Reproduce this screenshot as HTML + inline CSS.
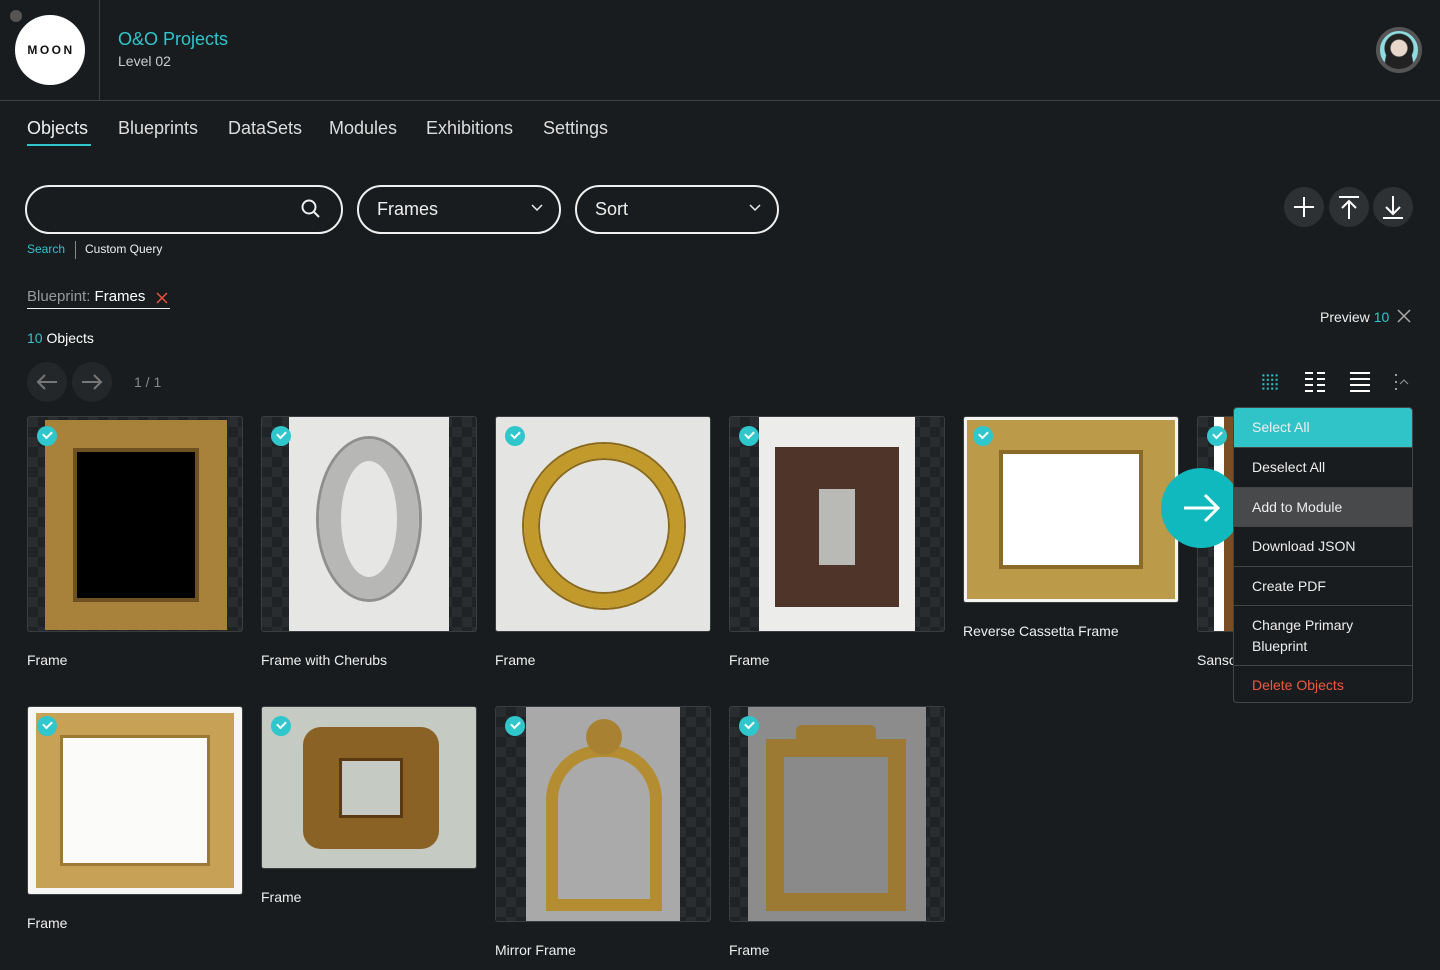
<!DOCTYPE html>
<html><head><meta charset="utf-8"><style>
*{box-sizing:border-box;margin:0;padding:0}
body{width:1440px;height:970px;background:#191c1e;font-family:"Liberation Sans",sans-serif;color:#e8e8e8;position:relative;overflow:hidden}
.a{position:absolute}
.t{font-size:14px;color:#eee;white-space:nowrap}
.chk{background:repeating-conic-gradient(#202325 0 25%,#2a2d2f 0 50%) 0 0/20px 20px}
.card{position:absolute;border:1px solid #3a3e41;border-radius:3px;overflow:hidden}
.tick{position:absolute;width:20px;height:20px;border-radius:50%;background:#2fc6cc;left:9px;top:9px}
.tick:after{content:"";position:absolute;left:6px;top:5px;width:7px;height:4px;border-left:2px solid #fff;border-bottom:2px solid #fff;transform:rotate(-45deg)}
.gold{border-style:solid;border-color:#b08a3a;background:transparent}
.pill{position:absolute;border:2px solid #f0f0f0;border-radius:25px;height:49px;top:185px}
.menu div{height:39.5px;border-top:1px solid #444;padding-left:18px;line-height:38px;font-size:14px;color:#eee}
.ib{position:absolute;width:40px;height:40px;border-radius:50%;background:#2e3133;top:187px}
</style></head><body>
<!-- header -->
<div class="a" style="left:10px;top:10px;width:12px;height:12px;border-radius:50%;background:#555"></div>
<div class="a" style="left:15px;top:15px;width:70px;height:70px;border-radius:50%;background:#fff;color:#111;font-size:12px;font-weight:bold;letter-spacing:2.5px;text-align:center;line-height:70px;padding-left:2px">MOON</div>
<div class="a" style="left:99px;top:0;width:1px;height:100px;background:#3c4043"></div>
<div class="a" style="left:0;top:100px;width:1440px;height:1px;background:#3c4043"></div>
<div class="a" style="left:118px;top:29px;font-size:18px;color:#2fc6cc">O&amp;O Projects</div>
<div class="a" style="left:118px;top:53px;font-size:14px;color:#ccc">Level 02</div>
<div class="a" style="left:1376px;top:27px;width:46px;height:46px;border-radius:50%;border:4px solid #555;background:radial-gradient(circle at 50% 45%,#e8d8cc 0 8px,#222 9px 14px,transparent 15px),radial-gradient(ellipse at 50% 100%,#222 0 14px,transparent 15px),#8fdde0"></div>
<!-- nav -->
<div class="a" style="left:27px;top:118px;font-size:18px;color:#eee">Objects</div>
<div class="a" style="left:27px;top:144px;width:64px;height:2px;background:#2fc6cc"></div>
<div class="a" style="left:118px;top:118px;font-size:18px;color:#ddd">Blueprints</div>
<div class="a" style="left:228px;top:118px;font-size:18px;color:#ddd">DataSets</div>
<div class="a" style="left:329px;top:118px;font-size:18px;color:#ddd">Modules</div>
<div class="a" style="left:426px;top:118px;font-size:18px;color:#ddd">Exhibitions</div>
<div class="a" style="left:543px;top:118px;font-size:18px;color:#ddd">Settings</div>
<!-- search -->
<div class="pill" style="left:25px;width:318px"></div>
<svg class="a" style="left:299px;top:197px" width="24" height="24" viewBox="0 0 24 24" fill="none" stroke="#eee" stroke-width="2"><circle cx="10" cy="10" r="6.5"/><path d="M15 15l5 5"/></svg>
<div class="pill" style="left:357px;width:204px"></div>
<div class="a" style="left:377px;top:199px;font-size:18px;color:#eee">Frames</div>
<svg class="a" style="left:530px;top:203px" width="14" height="10" viewBox="0 0 14 10" fill="none" stroke="#eee" stroke-width="1.5"><path d="M2 2l5 5 5-5"/></svg>
<div class="pill" style="left:575px;width:204px"></div>
<div class="a" style="left:595px;top:199px;font-size:18px;color:#eee">Sort</div>
<svg class="a" style="left:748px;top:203px" width="14" height="10" viewBox="0 0 14 10" fill="none" stroke="#eee" stroke-width="1.5"><path d="M2 2l5 5 5-5"/></svg>
<div class="a" style="left:27px;top:242px;font-size:12px;color:#2fc6cc">Search</div>
<div class="a" style="left:75px;top:241px;width:1px;height:18px;background:#888"></div>
<div class="a" style="left:85px;top:242px;font-size:12px;color:#eee">Custom Query</div>
<!-- right icons -->
<div class="ib" style="left:1284px"></div><div class="ib" style="left:1329px"></div><div class="ib" style="left:1373px"></div>
<svg class="a" style="left:1284px;top:187px" width="130" height="40" viewBox="0 0 130 40" fill="none" stroke="#fff" stroke-width="2"><path d="M20 10v20M10 20h20"/><path d="M55 10h20M65 14v18M58 21l7-7 7 7"/><path d="M99 31h20M109 9v18M102 20l7 7 7-7"/></svg>
<!-- filter -->
<div class="a" style="left:27px;top:288px;font-size:15px;color:#999">Blueprint: <span style="color:#fff">Frames</span></div>
<svg class="a" style="left:156px;top:292px" width="12" height="12" viewBox="0 0 12 12" stroke="#e8553b" stroke-width="1.5"><path d="M1 1l10 10M11 1L1 11"/></svg>
<div class="a" style="left:27px;top:308px;width:143px;height:1px;background:#eee"></div>
<div class="a" style="left:27px;top:330px;font-size:14px;color:#fff"><span style="color:#2fc6cc">10</span> Objects</div>
<div class="a" style="left:1320px;top:309px;font-size:14px;color:#eee">Preview <span style="color:#2fc6cc">10</span></div>
<svg class="a" style="left:1397px;top:309px" width="14" height="14" viewBox="0 0 14 14" stroke="#aaa" stroke-width="1.5"><path d="M1 1l12 12M13 1L1 13"/></svg>
<!-- pager -->
<div class="a" style="left:27px;top:362px;width:40px;height:40px;border-radius:50%;background:#24272a"></div>
<div class="a" style="left:72px;top:362px;width:40px;height:40px;border-radius:50%;background:#24272a"></div>
<svg class="a" style="left:27px;top:362px" width="85" height="40" viewBox="0 0 85 40" fill="none" stroke="#777" stroke-width="2"><path d="M30 20H11M18 13l-7 7 7 7"/><path d="M55 20h19M67 13l7 7-7 7"/></svg>
<div class="a" style="left:134px;top:374px;font-size:14px;color:#888">1 / 1</div>
<!-- view icons -->
<svg class="a" style="left:1258px;top:370px" width="160" height="24" viewBox="0 0 160 24">
<g fill="#2fc6cc"><pattern id="p" width="4.4" height="4.4" patternUnits="userSpaceOnUse"><rect width="2" height="2"/></pattern><rect x="2" y="2" width="20" height="20" fill="url(#p)"/></g>
<g fill="#fff"><rect x="47" y="2" width="8" height="2"/><rect x="59" y="2" width="8" height="2"/><rect x="47" y="8" width="8" height="2"/><rect x="59" y="8" width="8" height="2"/><rect x="47" y="14" width="8" height="2"/><rect x="59" y="14" width="8" height="2"/><rect x="47" y="20" width="8" height="2"/><rect x="59" y="20" width="8" height="2"/>
<rect x="92" y="2" width="20" height="2"/><rect x="92" y="8" width="20" height="2"/><rect x="92" y="14" width="20" height="2"/><rect x="92" y="20" width="20" height="2"/></g>
<g fill="#999"><rect x="137" y="4" width="2" height="2"/><rect x="137" y="11" width="2" height="2"/><rect x="137" y="18" width="2" height="2"/></g>
<path d="M142 14l4-4 4 4" stroke="#999" fill="none" stroke-width="1"/></svg>
<!-- row 1 -->
<div class="card chk" style="left:27px;top:416px;width:216px;height:216px">
 <div class="a" style="left:17px;top:3px;width:182px;height:210px;background:#000;border:28px solid #a8823a;box-shadow:inset 0 0 0 4px #6d5120"></div><div class="tick"></div></div>
<div class="card chk" style="left:261px;top:416px;width:216px;height:216px">
 <div class="a" style="left:27px;top:0;width:160px;height:216px;background:#e6e6e4"></div>
 <div class="a" style="left:57px;top:22px;width:100px;height:160px;border-radius:50%;border:22px solid #b7b7b5;box-shadow:0 0 0 3px #8f8f8d"></div><div class="tick"></div></div>
<div class="card" style="left:495px;top:416px;width:216px;height:216px;background:#e4e4e2">
 <div class="a" style="left:28px;top:27px;width:160px;height:164px;border-radius:50%;border:14px solid #c29a2c;box-shadow:0 0 0 2px #8a6a1a,inset 0 0 0 2px #8a6a1a"></div><div class="tick"></div></div>
<div class="card chk" style="left:729px;top:416px;width:216px;height:216px">
 <div class="a" style="left:29px;top:0;width:156px;height:216px;background:#ececea"></div>
 <div class="a" style="left:45px;top:30px;width:124px;height:160px;border:44px solid #4f3429;border-width:42px 44px;background:#b9b9b6"></div><div class="tick"></div></div>
<div class="card" style="left:963px;top:416px;width:216px;height:187px;background:#f4f4f2">
 <div class="a" style="left:3px;top:3px;width:208px;height:179px;background:#fff;border:32px solid #bb9a4a;border-width:30px 32px;box-shadow:inset 0 0 0 4px #8b6a28"></div><div class="tick"></div></div>
<div class="card chk" style="left:1197px;top:416px;width:60px;height:216px">
 <div class="a" style="left:16px;top:0;width:40px;height:216px;background:#fff"></div><div class="a" style="left:26px;top:0;width:20px;height:216px;background:#7a4e24"></div><div class="tick"></div></div>
<div class="a t" style="left:27px;top:652px">Frame</div>
<div class="a t" style="left:261px;top:652px">Frame with Cherubs</div>
<div class="a t" style="left:495px;top:652px">Frame</div>
<div class="a t" style="left:729px;top:652px">Frame</div>
<div class="a t" style="left:963px;top:623px">Reverse Cassetta Frame</div>
<div class="a t" style="left:1197px;top:652px">Sanso</div>
<!-- row 2 -->
<div class="card" style="left:27px;top:706px;width:216px;height:189px;background:#f6f6f4">
 <div class="a" style="left:8px;top:6px;width:198px;height:175px;background:#fbfbfa;border:24px solid #c7a256;border-width:22px 24px;box-shadow:inset 0 0 0 3px #9c7a34"></div><div class="tick"></div></div>
<div class="card" style="left:261px;top:706px;width:216px;height:163px;background:#c5cbc3">
 <div class="a" style="left:41px;top:20px;width:136px;height:122px;border-radius:18px;background:#c5cbc3;border:36px solid #8a6226;border-width:31px 36px;box-shadow:inset 0 0 0 3px #5a3a14"></div><div class="tick"></div></div>
<div class="card chk" style="left:495px;top:706px;width:216px;height:216px">
 <div class="a" style="left:30px;top:0;width:154px;height:216px;background:#a9a9a9"></div>
 <div class="a" style="left:50px;top:38px;width:116px;height:166px;border:12px solid #b48c32;border-radius:55px 55px 0 0;background:#aaa"></div>
 <div class="a" style="left:90px;top:12px;width:36px;height:36px;border-radius:50%;background:#a88232"></div><div class="tick"></div></div>
<div class="card chk" style="left:729px;top:706px;width:216px;height:216px">
 <div class="a" style="left:18px;top:0;width:178px;height:216px;background:#8c8c8c"></div>
 <div class="a" style="left:36px;top:32px;width:140px;height:172px;border:18px solid #9c7a34;background:#8a8a8a"></div>
 <div class="a" style="left:66px;top:18px;width:80px;height:26px;background:#9c7a34;border-radius:6px"></div><div class="tick"></div></div>
<div class="a t" style="left:27px;top:915px">Frame</div>
<div class="a t" style="left:261px;top:889px">Frame</div>
<div class="a t" style="left:495px;top:942px">Mirror Frame</div>
<div class="a t" style="left:729px;top:942px">Frame</div>
<!-- arrow -->
<div class="a" style="left:1161px;top:468px;width:80px;height:80px;border-radius:50%;background:#10b9bd"></div>
<svg class="a" style="left:1161px;top:468px" width="80" height="80" viewBox="0 0 80 80" fill="none" stroke="#fff" stroke-width="3"><path d="M23 40h34M44 27l13 13-13 13"/></svg>
<!-- menu -->
<div class="a menu" style="left:1233px;top:407px;width:180px;height:296px;background:#191c1e;border:1px solid #444;border-radius:4px;overflow:hidden">
<div style="background:#30c4c9;border:0;height:39px">Select All</div>
<div>Deselect All</div>
<div style="background:#48494b">Add to Module</div>
<div>Download JSON</div>
<div>Create PDF</div>
<div style="height:60px;line-height:21px;padding-top:9px">Change Primary<br>Blueprint</div>
<div style="color:#ef5a3a">Delete Objects</div>
</div>
</body></html>
